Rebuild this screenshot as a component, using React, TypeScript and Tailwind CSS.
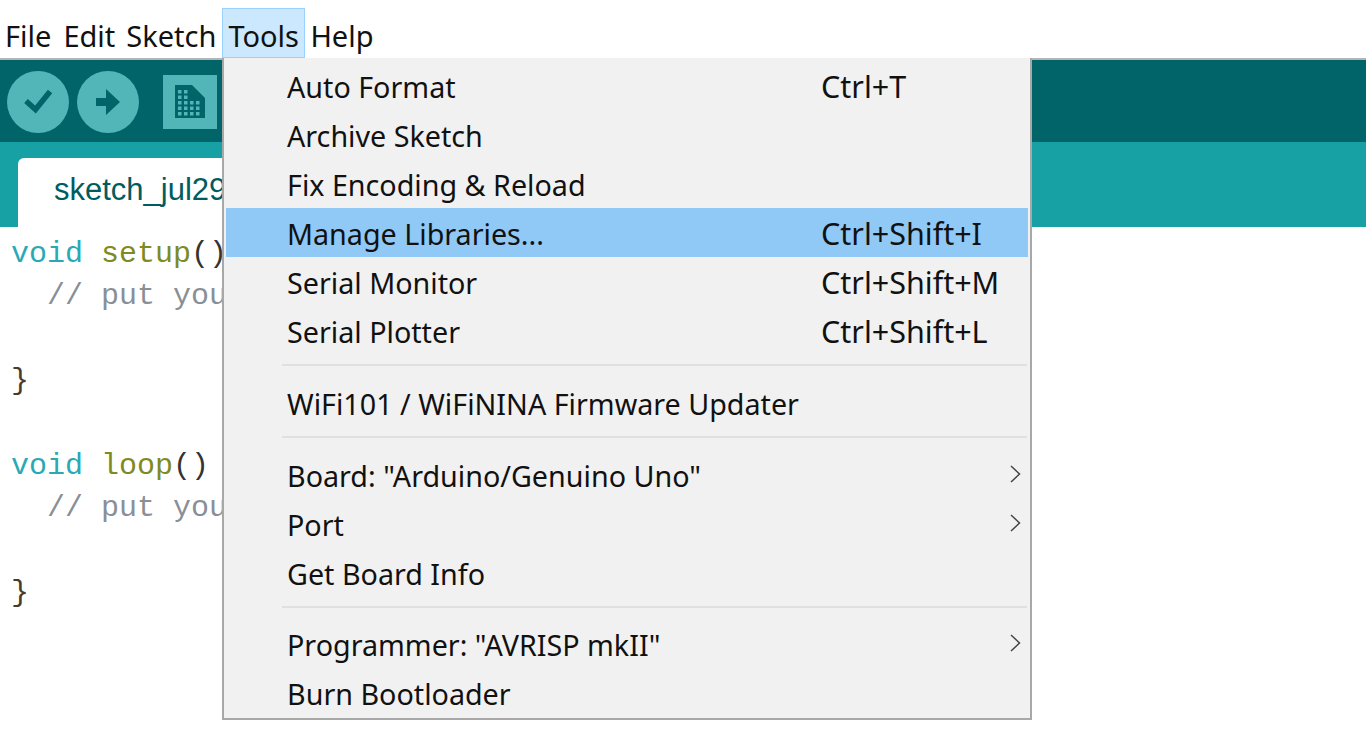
type item = {
  label: string;
  shortcut?: string;
  active?: boolean;
  arrow?: boolean;
};

const MenuRow = ({ item }: { item: item }) => {
  return (
    <div className="relative h-[49px] px-[2px]">
      <div
        className={`flex h-full items-center pl-[61px] pt-[2px] text-[#111111] ${
          item.active ? "bg-[#90c8f6]" : ""
        }`}
      >
        <span className="w-[534px] whitespace-nowrap">{item.label}</span>
        {item.shortcut && (
          <span className="whitespace-nowrap text-[30.500px]">{item.shortcut}</span>
        )}
      </div>
      {item.arrow && (
        <svg
          className="absolute right-[9px] top-[15px]"
          width="11"
          height="18"
          viewBox="0 0 11 18"
          fill="none"
        >
          <path d="M1 1 L9.500 9 L1 17" stroke="#444444" strokeWidth="1.500" />
        </svg>
      )}
    </div>
  );
};

const Separator = ({ className }: { className: string }) => {
  return <div className={`ml-[58px] mr-[3px] border-t-2 border-[#e0e0e0] ${className}`} />;
};

const CodeBlock = () => {
  return (
    <pre className="pl-[11px] pt-[6px] font-['Liberation_Mono',monospace] text-[30px] leading-[42.4px] text-[#4a3a2a]">
      <span className="text-[#2aa9b5]">void</span> <span className="text-[#808a22]">setup</span>
      <span className="text-[#333333]">()</span>
      {"\n"}  <span className="text-[#8a8f96]">// put you</span>
      {"\n\n}\n\n"}
      <span className="text-[#2aa9b5]">void</span> <span className="text-[#808a22]">loop</span>
      <span className="text-[#333333]">()</span>
      {"\n"}  <span className="text-[#8a8f96]">// put you</span>
      {"\n\n}"}
    </pre>
  );
};

// grid of dots on the "new sketch" page icon
const pageDots = [
  [3, 5], [9, 5],
  [3, 10.500], [9, 10.500],
  [3, 16], [9, 16], [15, 16], [21, 16],
  [3, 21.500], [9, 21.500], [15, 21.500], [21, 21.500],
  [3, 27], [9, 27], [15, 27], [21, 27],
];

const App = () => {
  return (
    <div className="relative h-[754px] w-[1366px] overflow-hidden bg-white font-['Noto_Sans','Open_Sans',sans-serif]">
      {/* menu bar */}
      <div className="flex h-[60px] items-start border-b-2 border-[#b4b4b4] pl-[5px] text-[29px] leading-[71px] text-[#111111]">
        <span className="mr-[12px]">File</span>
        <span className="mr-[11px]">Edit</span>
        <span className="mr-[6px]">Sketch</span>
        <span className="mt-[8px] h-[50px] w-[83px] border border-[#99d1ff] bg-[#cce8ff] pl-[5px] leading-[54px]">
          Tools
        </span>
        <span className="ml-[5px]">Help</span>
      </div>

      {/* toolbar */}
      <div className="flex h-[82px] items-center bg-[#006468] pl-[7px] pt-[1px]">
        <div className="flex size-[62px] items-center justify-center rounded-full bg-[#52b6b9]">
          <svg width="28" height="25" viewBox="0 0 28 25" fill="none">
            <path d="M2 12 L11.500 20.500 L26 2.500" stroke="#006468" strokeWidth="5.500" />
          </svg>
        </div>
        <div className="ml-[8px] flex size-[62px] items-center justify-center rounded-full bg-[#52b6b9]">
          <svg width="24" height="26" viewBox="0 0 24 26" fill="#006468">
            <path d="M0 9 H10 V0 L24 13 L10 26 V17 H0 Z" />
          </svg>
        </div>
        <div className="ml-[24px] flex size-[54px] items-center justify-center bg-[#52b6b9]">
          <svg width="30" height="33" viewBox="0 0 30 33">
            <path d="M0 0 H17 L30 13 V33 H0 Z" fill="#006468" />
            {pageDots.map(([x, y], index) => {
              return <rect key={index} x={x} y={y} width="3.500" height="3.500" fill="#52b6b9" />;
            })}
          </svg>
        </div>
      </div>

      {/* tabs */}
      <div className="flex h-[85px] items-end bg-[#17a1a5] pl-[18px]">
        <div className="flex h-[69px] w-[320px] items-center rounded-t-[6px] bg-white pb-[5px] pl-[36px] font-['Liberation_Sans',sans-serif] text-[31px] text-[#005c5f]">
          sketch_jul29a
        </div>
      </div>

      <CodeBlock />

      {/* Tools dropdown */}
      <div className="absolute left-[222px] top-[58px] h-[662px] w-[810px] border-2 border-t-0 border-[#a8a8a8] bg-[#f1f1f1] pt-[3px] text-[28.700px]">
        <MenuRow item={{ label: "Auto Format", shortcut: "Ctrl+T" }} />
        <MenuRow item={{ label: "Archive Sketch" }} />
        <MenuRow item={{ label: "Fix Encoding & Reload" }} />
        <MenuRow item={{ label: "Manage Libraries...", shortcut: "Ctrl+Shift+I", active: true }} />
        <MenuRow item={{ label: "Serial Monitor", shortcut: "Ctrl+Shift+M" }} />
        <MenuRow item={{ label: "Serial Plotter", shortcut: "Ctrl+Shift+L" }} />
        <Separator className="mb-[12px] mt-[9px]" />
        <MenuRow item={{ label: "WiFi101 / WiFiNINA Firmware Updater" }} />
        <Separator className="mb-[12px] mt-[9px]" />
        <MenuRow item={{ label: 'Board: "Arduino/Genuino Uno"', arrow: true }} />
        <MenuRow item={{ label: "Port", arrow: true }} />
        <MenuRow item={{ label: "Get Board Info" }} />
        <Separator className="mb-[11px] mt-[9px]" />
        <MenuRow item={{ label: 'Programmer: "AVRISP mkII"', arrow: true }} />
        <MenuRow item={{ label: "Burn Bootloader" }} />
      </div>
    </div>
  );
};

export default App;
